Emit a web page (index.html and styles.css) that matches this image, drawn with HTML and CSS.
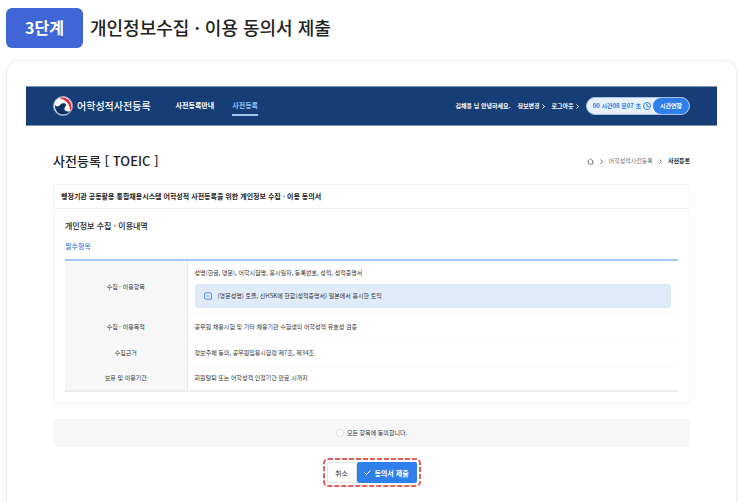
FILE: index.html
```html
<!DOCTYPE html>
<html lang="ko">
<head>
<meta charset="utf-8">
<meta name="viewport" content="width=device-width, initial-scale=1">
<title>개인정보수집 · 이용 동의서 제출</title>
<link rel="stylesheet" href="styles.css">
</head>
<body>
<header class="step">
  <span class="step-badge">3단계</span>
  <h1 class="step-title">개인정보수집 · 이용 동의서 제출</h1>
</header>
<section class="card">
  <div class="topbar">
    <a class="brand" href="#">
      <svg class="brand-logo" viewBox="0 0 40 40" aria-hidden="true">
        <circle cx="20" cy="20" r="19" fill="#fff" stroke="#8ea3c1" stroke-width="2"/>
        <path d="M13 4C25 0 37 9 37 21C37 25 36 28 34 30C34 20 31 14 25 10C21 7 17 6 13 4Z" fill="#e5263c"/>
        <path d="M4 17C3 29 10 37 20 37C27 37 32 34 34 30C30 32 24 31 23 27C22 22 27 20 26 17C24 13 18 14 15 17C12 21 6 23 4 17Z" fill="#0d3560"/>
      </svg>
      <span>어학성적사전등록</span>
    </a>
    <nav class="nav">
      <a href="#">사전등록안내</a>
      <a class="active" href="#">사전등록</a>
    </nav>
    <div class="user">
      <span>김채용 님 안녕하세요.</span>
      <a href="#">정보변경<svg class="chev" viewBox="0 0 6 10" aria-hidden="true"><path d="M1 1l4 4-4 4"/></svg></a>
      <a href="#">로그아웃<svg class="chev" viewBox="0 0 6 10" aria-hidden="true"><path d="M1 1l4 4-4 4"/></svg></a>
    </div>
    <div class="timer">
      <span class="time">00 시간08 분07 초</span>
      <svg class="clock" viewBox="0 0 16 16" aria-hidden="true"><circle cx="8" cy="8" r="7"/><path d="M8 4v5h4"/></svg>
      <button class="extend" type="button">시간연장</button>
    </div>
  </div>
  <main class="content">
    <div class="page-head">
      <h2>사전등록 [ TOEIC ]</h2>
      <nav class="crumbs" aria-label="경로">
        <svg class="home" viewBox="0 0 16 16" aria-hidden="true"><path d="M1 8l7-6 7 6M3 7v7h10V7"/></svg>
        <svg class="chev" viewBox="0 0 6 10" aria-hidden="true"><path d="M1 1l4 4-4 4"/></svg>
        <a href="#">어학성적사전등록</a>
        <svg class="chev" viewBox="0 0 6 10" aria-hidden="true"><path d="M1 1l4 4-4 4"/></svg>
        <strong>사전등록</strong>
      </nav>
    </div>
    <section class="panel">
      <h3 class="panel-title">행정기관 공동활용 통합채용시스템 어학성적 사전등록을 위한 개인정보 수집 · 이용 동의서</h3>
      <div class="panel-body">
        <h4>개인정보 수집 · 이용내역</h4>
        <p class="required">필수항목</p>
        <table>
          <tbody>
            <tr>
              <th scope="row">수집 · 이용항목</th>
              <td>성명(한글, 영문), 어학시험명, 응시일자, 등록번호, 성적, 성적증명서
                <p class="note">
                  <svg viewBox="0 0 18 18" aria-hidden="true"><path d="M5 2h8a4 4 0 0 1 4 4v10H5a4 4 0 0 1-4-4V6a4 4 0 0 1 4-4z"/><path d="M5 9h2M8 9h2M11 9h2"/></svg>
                  <span>(영문성명) 토플, 신HSK에 한함(성적증명서) 일본에서 응시한 토익</span>
                </p>
              </td>
            </tr>
            <tr><th scope="row">수집 · 이용목적</th><td>공무원 채용시험 및 기타 채용기관 수험생의 어학성적 유효성 검증</td></tr>
            <tr><th scope="row">수집근거</th><td>정보주체 동의, 공무원임용시험령 제7조, 제34조</td></tr>
            <tr><th scope="row">보유 및 이용기간</th><td>회원탈퇴 또는 어학성적 인정기간 만료 시까지</td></tr>
          </tbody>
        </table>
      </div>
    </section>
    <label class="agree"><input type="radio" name="agree"><span>모든 항목에 동의합니다.</span></label>
    <div class="actions">
      <button class="cancel" type="button">취소</button>
      <button class="submit" type="submit"><svg viewBox="0 0 14 10" aria-hidden="true"><path d="M1 5l4 4 8-8"/></svg>동의서 제출</button>
      <svg class="outline" aria-hidden="true"><rect x="1" y="1" rx="4"/></svg>
    </div>
  </main>
</section>
</body>
</html>
```
FILE: styles.css
```css
* { box-sizing: border-box; }
body {
  margin: 0;
  padding: 8px 6px 0;
  background: #fff;
  color: #222;
  font-family: "Noto Sans CJK KR", sans-serif;
  font-size: 6px;
  line-height: 10px;
}
h1, h2, h3, h4, p { margin: 0; }
a { color: inherit; text-decoration: none; }
button { font: inherit; padding: 0; border: 0; }
svg { fill: none; flex: none; }

.step { display: flex; align-items: flex-start; gap: 7px; height: 40px; }
.step-badge {
  width: 77px;
  height: 40px;
  border-radius: 6px;
  background: #4065d6;
  color: #fff;
  font-size: 16px;
  font-weight: 700;
  line-height: 38px;
  text-align: center;
}
.step-title { font-size: 18px; font-weight: 500; line-height: 38px; }

.card {
  margin-top: 12px;
  min-height: calc(100vh - 60px);
  padding: 25px 19px 0;
  border: 1px solid #ebebeb;
  border-bottom: 0;
  border-radius: 12px 12px 0 0;
}

.topbar {
  display: flex;
  align-items: center;
  height: 40px;
  padding: 0 27px;
  background: #163d75;
  border: solid #7f96b7;
  border-width: 1px 0;
  color: #fff;
  font-weight: 700;
}
.brand { display: flex; align-items: center; gap: 4px; font-size: 10px; font-weight: 500; }
.brand-logo { width: 20px; height: 20px; }
.nav { display: flex; gap: 18px; margin-left: 25px; font-size: 7px; line-height: 18px; }
.nav a { border-bottom: 2px solid transparent; }
.nav .active { border-color: #a4c3ec; color: #8fc0fa; }
.user { display: flex; gap: 7px; margin-left: auto; }
.user a { display: flex; align-items: center; gap: 2px; }
.chev { width: 3px; height: 5px; stroke: currentColor; stroke-width: 2; }
.timer {
  display: flex;
  align-items: center;
  gap: 2px;
  height: 18px;
  margin-left: 7px;
  padding-left: 6px;
  border: 1px solid #a6c2e8;
  border-radius: 9px;
  background: #e8f0fb;
  color: #2f7bea;
}
.clock { width: 8px; height: 8px; stroke: currentColor; stroke-width: 2; }
.extend {
  width: 36px;
  height: 16px;
  border-radius: 8px;
  background: #2f80ed;
  color: #fff;
}

.content { padding: 0 27px; }
.page-head {
  display: flex;
  align-items: center;
  justify-content: space-between;
  height: 58px;
  padding-top: 12px;
}
.page-head h2 { font-size: 13px; font-weight: 500; line-height: 20px; }
.crumbs { display: flex; align-items: center; gap: 6px; color: #777; }
.crumbs strong { color: #222; }
.home { width: 7px; height: 7px; stroke: currentColor; stroke-width: 2; }

.panel { border: 1px solid #f4f4f4; border-radius: 2px; }
.panel-title {
  padding: 0 7px;
  border-bottom: 1px solid #f1f1f1;
  font-size: 7px;
  font-weight: 700;
  line-height: 23px;
}
.panel-body { padding: 12px 11px 11px; }
.panel-body h4 { font-size: 8px; font-weight: 500; line-height: 10px; }
.required { margin-top: 10px; color: #3577ea; font-size: 7px; font-weight: 500; line-height: 10px; }
table {
  width: 100%;
  margin-top: 8px;
  border-top: 2px solid #a5c9f5;
  border-bottom: 2px solid #ececec;
  border-spacing: 0;
  color: #333;
}
th, td { height: 26px; padding: 0 7px; border-bottom: 1px solid #f7f7f7; }
th { width: 20%; border-right: 1px solid #e8e8e8; background: #f7f7f7; font-weight: 400; }
td { text-align: left; }
tr:first-child td { height: 53px; padding-top: 2px; }
tr:last-child > * { border-bottom: 0; height: 24px; }
.note {
  display: flex;
  align-items: center;
  gap: 6px;
  height: 24px;
  margin-top: 6px;
  padding: 0 9px;
  border-radius: 3px;
  background: #e0ebfa;
}
.note svg { width: 8px; height: 8px; stroke: #3c82ef; stroke-width: 2; }

.agree {
  display: flex;
  align-items: center;
  justify-content: center;
  gap: 3px;
  height: 28px;
  margin-top: 15px;
  border-radius: 3px;
  background: #f7f7f7;
  color: #333;
}
.agree input {
  appearance: none;
  width: 8px;
  height: 8px;
  margin: 0;
  border: 1px solid #ddd;
  border-radius: 50%;
  background: #fff;
}
.agree input:checked { border: 2px solid #2f80ed; }

.actions {
  position: relative;
  display: flex;
  width: 98px;
  height: 29px;
  margin: 11px auto 0;
  padding: 4px;
  font-size: 7px;
}
.outline { position: absolute; inset: 0; width: 100%; height: 100%; pointer-events: none; }
.outline rect {
  width: calc(100% - 2px);
  height: calc(100% - 2px);
  stroke: #ea5c5c;
  stroke-width: 2;
  stroke-dasharray: 5 2;
}
.cancel {
  width: 30px;
  border: 1px solid #e3e3e3;
  border-radius: 2px;
  background: #fff;
  color: #333;
}
.submit {
  display: flex;
  flex: 1;
  align-items: center;
  justify-content: center;
  gap: 3px;
  border-radius: 2px;
  background: #2f80ed;
  color: #fff;
  font-weight: 700;
}
.submit svg { width: 7px; height: 5px; stroke: #fff; stroke-width: 2; }
```
